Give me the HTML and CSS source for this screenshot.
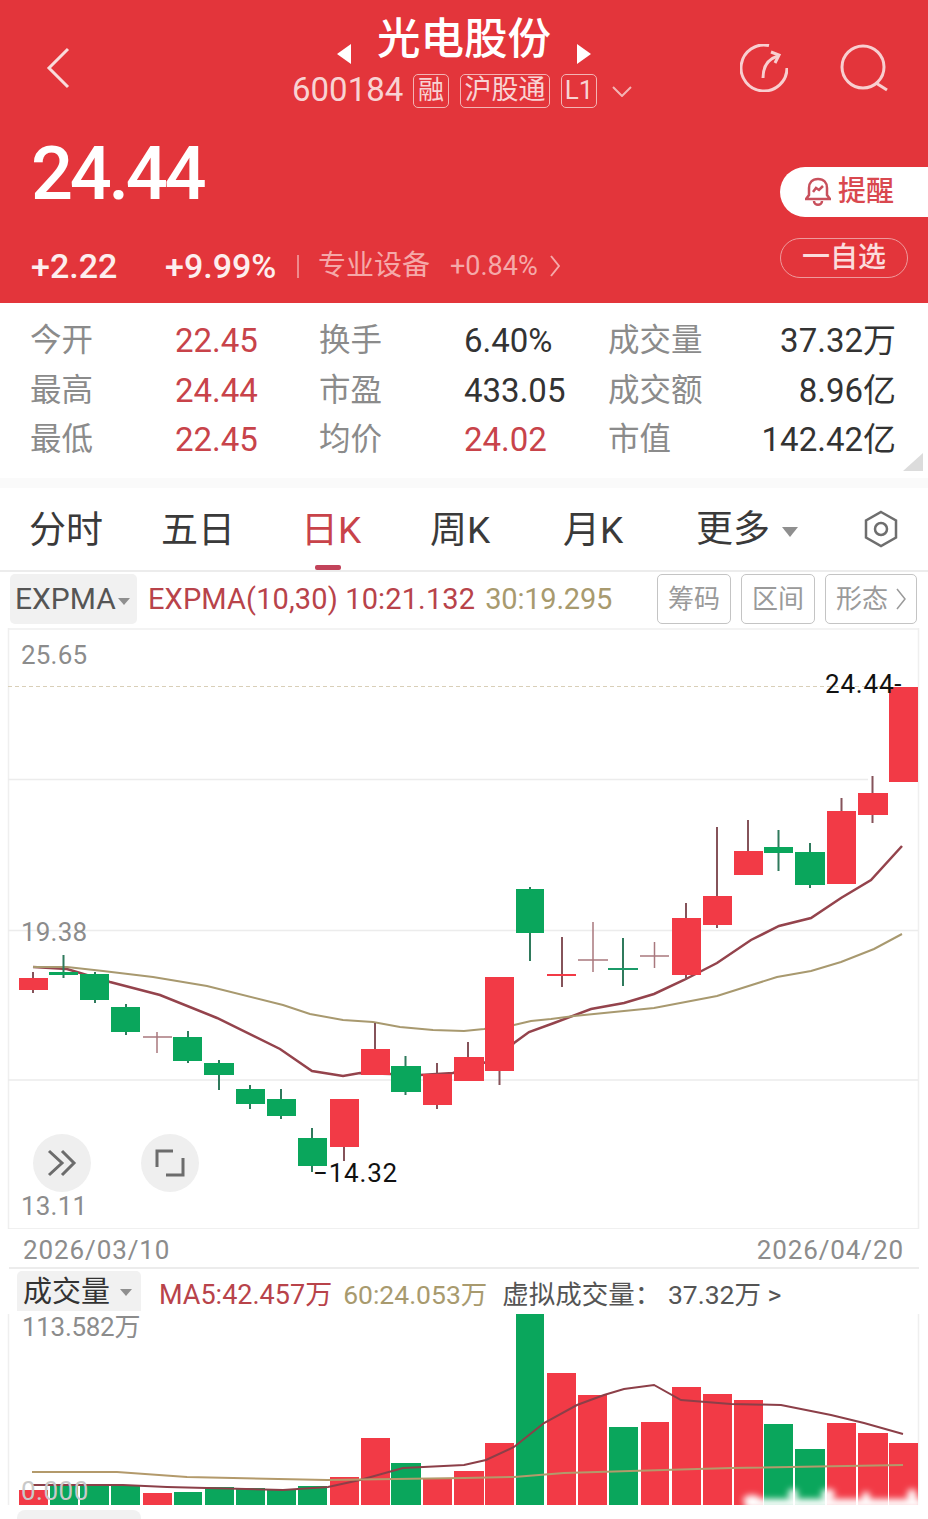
FILE: index.html
```html
<!DOCTYPE html>
<html lang="zh-CN">
<head>
<meta charset="utf-8">
<title>光电股份</title>
<link rel="stylesheet" href="styles.css">
</head>
<body>
<div class="page">
  <header class="hero">
    <div class="topbar">
      <svg class="back" viewBox="0 0 26 44"><path d="M22 3 3 22l19 19"/></svg>
      <div class="identity">
        <div class="title-row">
          <span class="tri tri-l"></span>
          <h1 class="name">光电股份</h1>
          <span class="tri tri-r"></span>
        </div>
        <div class="code-row">
          <span class="code">600184</span>
          <span class="badge b-rong">融</span>
          <span class="badge b-hgt">沪股通</span>
          <span class="badge b-l1">L1</span>
          <svg class="code-arrow" viewBox="0 0 20 11"><path d="M1 1l9 9 9-9"/></svg>
        </div>
      </div>
      <div class="top-icons">
        <svg class="ticon" viewBox="0 0 48 48"><path d="M29 1.5A23 23 0 1 0 47 24"/><path d="M23 34C23 22 28 15 38 12"/><path d="M31 8l8 3-4 8"/></svg>
        <svg class="ticon" viewBox="0 0 48 48"><circle cx="23" cy="23" r="21"/><path d="M36 39l11 7"/></svg>
      </div>
    </div>
    <div class="quote">
      <div class="quote-main">
        <div class="price">24.44</div>
        <div class="change-row">
          <span class="chg chg-a">+2.22</span>
          <span class="chg chg-b">+9.99%</span>
          <span class="sep"></span>
          <span class="sector">专业设备</span>
          <span class="sector-pct">+0.84%</span>
          <svg class="sector-arrow" viewBox="0 0 10 22"><path d="M1 1l8 10-8 10"/></svg>
        </div>
      </div>
      <div class="quote-actions">
        <div class="alert-btn">
          <svg class="bell" viewBox="0 0 26 30"><path d="M13 2C7 2 4 6 4 11v7l-3 4h24l-3-4v-7c0-5-3-9-9-9z"/><path d="M9 24c0 5 8 5 8 0"/><path d="M8 15l3-4 3 2 4-4"/></svg>
          <span>提醒</span>
        </div>
        <div class="watch-btn">一自选</div>
      </div>
    </div>
  </header>

  <section class="stats">
    <span class="lbl">今开</span><span class="val red">22.45</span>
    <span class="lbl">换手</span><span class="val">6.40%</span>
    <span class="lbl">成交量</span><span class="val end">37.32万</span>
    <span class="lbl">最高</span><span class="val red">24.44</span>
    <span class="lbl">市盈</span><span class="val">433.05</span>
    <span class="lbl">成交额</span><span class="val end">8.96亿</span>
    <span class="lbl">最低</span><span class="val red">22.45</span>
    <span class="lbl">均价</span><span class="val red">24.02</span>
    <span class="lbl">市值</span><span class="val end">142.42亿</span>
    <span class="corner"></span>
  </section>
  <div class="band"></div>

  <nav class="tabs">
    <span class="tab">分时</span>
    <span class="tab">五日</span>
    <span class="tab active">日K</span>
    <span class="tab">周K</span>
    <span class="tab">月K</span>
    <span class="tab more">更多<i class="caret"></i></span>
    <svg class="gear" viewBox="0 0 36 38"><path d="M18 2 33 10.500V27.500L18 36 3 27.500V10.500z"/><circle cx="18" cy="19" r="6"/></svg>
  </nav>

  <div class="indicator">
    <div class="picker">EXPMA<i class="caret small"></i></div>
    <div class="ind-values"><span class="v-red">EXPMA(10,30) 10:21.132</span><span class="v-tan">30:19.295</span></div>
    <div class="ind-tools">
      <span class="tool t1">筹码</span>
      <span class="tool t1">区间</span>
      <span class="tool t2">形态<svg class="tool-arrow" viewBox="0 0 10 22"><path d="M1 1l8 10-8 10"/></svg></span>
    </div>
  </div>

  <section class="kchart">
    <svg class="plot" width="928" height="601" viewBox="0 628 928 601">
      <path class="frame" d="M8.500 628V1229M918.500 628V1229M8 629H919"/>
      <path class="dash" d="M8 686.500H890"/>
      <path class="grid" d="M8 779.500H868M8 930.500H918M8 1080H918M8 1229H918"/>
      <polyline class="ema10" points="33,967 67,969 110,982 160,995 217,1018 280,1049 312,1071 343,1076 360,1073 420,1075 453,1073 468,1068 499,1058 514,1043 529,1032 554,1023 591,1009 624,1003 654,994 684,980 717,963 751,940 779,926 811,918 841,898 871,880 902,846"/>
      <polyline class="ema30" points="33,967 67,967 103,971 153,977 207,986 283,1005 310,1014 343,1020 373,1022 400,1027 433,1030 464,1031 484,1029 514,1025 531,1021 551,1019 574,1016 614,1012 654,1008 717,996 777,977 811,971 841,962 874,949 902,934"/>

      <path class="wr" d="M33 972V993M344 1147V1161M375 1023V1049M437 1063V1109M468 1042V1081M499.500 1071V1085M686 903V980M717 827V928M748 820V851M841.500 798V811M872.500 776V823"/>
      <path class="wg" d="M63.500 955V978M95 972V1003M126 1004V1035M188 1031V1063M219 1060V1090M250 1085V1109M281 1089V1119M312 1128V1172M405.500 1056V1095M530 887V961M623 938V986M778.500 830V871M810 843V888"/>
      <path class="wthin" d="M157 1032V1053M143 1037H172M593 922V972M578 960H608M654.500 942V968M640 956H669"/>
      <path class="wr" d="M562 937V987"/>
      <path class="wthing" d="M608 969H638"/>

      <rect class="r" x="19" y="978" width="29" height="12"/>
      <rect class="g" x="49" y="972" width="29" height="3"/>
      <rect class="g" x="80" y="974" width="29" height="26"/>
      <rect class="g" x="111" y="1007" width="29" height="25"/>
      <rect class="g" x="173" y="1037" width="29" height="24"/>
      <rect class="g" x="204" y="1063" width="30" height="12"/>
      <rect class="g" x="236" y="1089" width="29" height="15"/>
      <rect class="g" x="267" y="1099" width="29" height="17"/>
      <rect class="g" x="298" y="1138" width="29" height="28"/>
      <rect class="r" x="330" y="1099" width="29" height="48"/>
      <rect class="r" x="361" y="1049" width="29" height="26"/>
      <rect class="g" x="391" y="1066" width="30" height="26"/>
      <rect class="r" x="423" y="1074" width="29" height="31"/>
      <rect class="r" x="454" y="1057" width="30" height="24"/>
      <rect class="r" x="485" y="977" width="29" height="94"/>
      <rect class="g" x="516" y="889" width="28" height="44"/>
      <rect class="r" x="547" y="974" width="29" height="2"/>
      <rect class="r" x="672" y="918" width="29" height="57"/>
      <rect class="r" x="703" y="896" width="29" height="29"/>
      <rect class="r" x="734" y="851" width="29" height="24"/>
      <rect class="g" x="764" y="847" width="29" height="6"/>
      <rect class="g" x="795" y="852" width="30" height="33"/>
      <rect class="r" x="827" y="811" width="29" height="73"/>
      <rect class="r" x="858" y="793" width="30" height="22"/>
      <rect class="r" x="889" y="687" width="29" height="95"/>
    </svg>
    <span class="axis a-top">25.65</span>
    <span class="axis a-mid">19.38</span>
    <span class="axis a-low">13.11</span>
    <span class="mark m-high">24.44-</span>
    <span class="mark m-low">−14.32</span>
    <div class="round r-a"><svg viewBox="0 0 58 58"><path d="M16 17l13 12-13 12M29 17l12 12-12 12"/></svg></div>
    <div class="round r-b"><svg viewBox="0 0 58 58"><path d="M16 33V17h16M42 24v17H25"/></svg></div>
  </section>

  <div class="dates"><span>2026/03/10</span><span>2026/04/20</span></div>

  <div class="vol-head">
    <div class="vol-picker"><span class="vp-text">成交量</span><i class="caret small"></i></div>
    <span class="vh vh-red">MA5:42.457万</span>
    <span class="vh vh-tan">60:24.053万</span>
    <span class="vh vh-dark">虚拟成交量： 37.32万 &gt;</span>
  </div>

  <section class="vchart">
    <svg class="plot" width="928" height="191" viewBox="0 1314 928 191">
      <defs><filter id="smudge" x="-10%" y="-60%" width="120%" height="220%"><feGaussianBlur stdDeviation="3"/></filter></defs>
      <path class="frame" d="M8.500 1314V1505M918.500 1314V1505"/>
      <rect class="r" x="19" y="1490" width="29" height="15"/>
      <rect class="g" x="50" y="1486" width="28" height="19"/>
      <rect class="g" x="80" y="1486" width="29" height="19"/>
      <rect class="g" x="111" y="1486" width="29" height="19"/>
      <rect class="r" x="143" y="1493" width="29" height="12"/>
      <rect class="g" x="174" y="1492" width="28" height="13"/>
      <rect class="g" x="205" y="1487" width="29" height="18"/>
      <rect class="g" x="236" y="1488" width="29" height="17"/>
      <rect class="g" x="267" y="1490" width="29" height="15"/>
      <rect class="g" x="298" y="1486" width="29" height="19"/>
      <rect class="r" x="330" y="1477" width="29" height="28"/>
      <rect class="r" x="361" y="1438" width="29" height="67"/>
      <rect class="g" x="391" y="1463" width="30" height="42"/>
      <rect class="r" x="423" y="1478" width="29" height="27"/>
      <rect class="r" x="454" y="1471" width="30" height="34"/>
      <rect class="r" x="485" y="1443" width="29" height="62"/>
      <rect class="g" x="516" y="1314" width="28" height="191"/>
      <rect class="r" x="547" y="1373" width="29" height="132"/>
      <rect class="r" x="578" y="1395" width="29" height="110"/>
      <rect class="g" x="609" y="1427" width="29" height="78"/>
      <rect class="r" x="641" y="1422" width="28" height="83"/>
      <rect class="r" x="672" y="1387" width="29" height="118"/>
      <rect class="r" x="703" y="1394" width="29" height="111"/>
      <rect class="r" x="734" y="1400" width="29" height="105"/>
      <rect class="g" x="764" y="1424" width="29" height="81"/>
      <rect class="g" x="795" y="1449" width="30" height="56"/>
      <rect class="r" x="827" y="1423" width="29" height="82"/>
      <rect class="r" x="858" y="1433" width="30" height="72"/>
      <rect class="r" x="889" y="1443" width="29" height="62"/>
      <polyline class="ma5" points="32,1485 123,1485 167,1487 283,1490 328,1487 360,1480 403,1468 464,1465 486,1460 514,1447 544,1423 577,1405 604,1395 624,1389 654,1385 681,1400 731,1404 781,1405 831,1415 864,1423 903,1434"/>
      <polyline class="ma60" points="32,1472 117,1472 187,1477 327,1480 464,1478 514,1477 564,1473 664,1470 731,1468 903,1465"/>
      <g class="smudge" filter="url(#smudge)">
        <rect x="745" y="1499" width="178" height="10"/>
        <ellipse cx="752" cy="1500" rx="9" ry="5"/>
        <ellipse cx="793" cy="1494" rx="5" ry="5"/>
        <ellipse cx="828" cy="1494" rx="7" ry="5"/>
        <ellipse cx="866" cy="1496" rx="4" ry="4"/>
        <ellipse cx="912" cy="1495" rx="5" ry="6"/>
      </g>
    </svg>
    <span class="axis v-top">113.582万</span>
    <span class="axis v-zero">0.000</span>
  </section>

  <footer class="stub"><div class="stub-pill"></div></footer>
</div>
</body>
</html>
```
FILE: styles.css
```css
* { box-sizing: border-box; margin: 0; padding: 0; }
html, body { background: #fff; }
body {
  width: 928px;
  height: 1519px;
  overflow: hidden;
  font-family: Roboto, "Noto Sans CJK SC", sans-serif;
  color: #222;
}
.page { width: 928px; height: 1519px; display: flex; flex-direction: column; }
svg { display: block; }
i { display: block; }

/* header */
.hero { height: 303px; background: #e3353b; color: #fff; flex: none; }
.topbar { height: 118px; display: grid; grid-template-columns: 1fr auto 1fr; position: relative; }
.back { width: 26px; height: 44px; margin: 46px 0 0 46px; fill: none; stroke: #f9dcdc; stroke-width: 3; }
.identity { display: flex; flex-direction: column; align-items: center; padding-top: 15px; }
.title-row { display: flex; align-items: center; height: 50px; gap: 26px; }
.name { font-size: 43.500px; line-height: 50px; font-weight: 500; color: #fff; white-space: nowrap; }
.tri { width: 0; height: 0; border-style: solid; margin-top: 28px; }
.tri-l { border-width: 10px 14px 10px 0; border-color: transparent #fff transparent transparent; }
.tri-r { border-width: 10px 0 10px 14px; border-color: transparent transparent transparent #fff; }
.code-row { display: flex; align-items: center; height: 36px; margin: 7px 4px 0 0; color: #f8d3d3; }
.code { font-size: 33px; line-height: 36px; width: 121px; }
.badge {
  height: 34px; border: 1.5px solid #f3b4b4; border-radius: 5px; font-size: 27px; line-height: 30px;
  text-align: center; white-space: nowrap; overflow: hidden; margin-top: 2px;
}
.b-rong { width: 36px; margin-right: 11px; font-size: 26px; }
.b-hgt { width: 90px; margin-right: 11px; font-size: 27px; }
.b-l1 { width: 36px; margin-right: 15px; font-size: 26px; }
.code-arrow { width: 20px; height: 11px; fill: none; stroke: #f3b4b4; stroke-width: 2; margin-top: 2px; }
.top-icons { display: flex; justify-content: flex-end; gap: 52px; padding: 44px 40px 0 0; }
.ticon { width: 48px; height: 48px; fill: none; stroke: #f8cfd0; stroke-width: 3; flex: none; }

.quote { display: flex; justify-content: space-between; height: 185px; }
.quote-main { padding-left: 31px; }
.price { font-size: 74px; line-height: 74px; letter-spacing: -3.300px; font-weight: 500; margin-top: 19px; }
.change-row { display: flex; align-items: center; height: 40px; margin-top: 35px; }
.chg { font-size: 34px; line-height: 40px; font-weight: 500; color: #fdeeee; }
.chg-a { width: 134px; }
.chg-b { width: 132px; }
.sep { width: 2px; height: 23px; background: #ee8a8c; margin-right: 19px; }
.sector { font-size: 28px; line-height: 40px; color: #f5a9a9; width: 132px; }
.sector-pct { font-size: 27px; line-height: 40px; color: #f5a9a9; width: 100px; }
.sector-arrow { width: 10px; height: 22px; fill: none; stroke: #f5a9a9; stroke-width: 2; }
.quote-actions { width: 148px; padding-top: 49px; }
.alert-btn {
  height: 50px; background: #fff; border-radius: 25px 0 0 25px; display: flex; align-items: center;
  padding-left: 25px; gap: 7px; color: #d9484f; font-size: 28px; line-height: 50px; font-weight: 500;
}
.bell { width: 26px; height: 30px; fill: none; stroke: #c8505c; stroke-width: 2.500; }
.watch-btn {
  width: 128px; height: 40px; margin-top: 21px; border: 1.5px solid #ee9a9c; border-radius: 20px;
  color: #fbdcdc; font-size: 28px; line-height: 37px; text-align: center; font-weight: 500;
}

/* stats */
.stats {
  height: 175px; flex: none; padding: 13px 32px 0 30px; position: relative;
  display: grid; grid-template-columns: 145px 144px 145px 144px 1fr auto; grid-auto-rows: 49.500px; align-items: center;
}
.lbl { font-size: 31.500px; line-height: 49px; color: #8b8b8b; white-space: nowrap; }
.val { font-size: 33px; line-height: 49px; color: #333; white-space: nowrap; }
.val.red { color: #c8434a; }
.val.end { text-align: right; }
.corner {
  position: absolute; left: 903px; top: 150px; width: 20px; height: 18px; background: #dcdcdc;
  clip-path: polygon(100% 0, 100% 100%, 0 100%);
}
.band { height: 10px; flex: none; background: #fafafa; }

/* tabs */
.tabs {
  height: 84px; flex: none; padding-left: 29px; position: relative; border-bottom: 2px solid #ececec;
  display: grid; grid-template-columns: 132px 140px 129px 133px 133px 167px 36px; align-items: center;
}
.tab { font-size: 37px; line-height: 82px; height: 82px; padding-top: 2px; color: #3a3a3a; position: relative; white-space: nowrap; }
.tab.active { color: #c8434a; }
.tab.active::after {
  content: ""; position: absolute; left: 14px; bottom: 0; width: 26px; height: 5px; background: #c2435a; border-radius: 2px;
}
.tab.more { display: flex; align-items: center; gap: 12px; }
.caret { width: 0; height: 0; border-style: solid; border-width: 10px 8px 0 8px; border-color: #8f8f8f transparent transparent transparent; margin-top: 4px; }
.caret.small { border-width: 7px 6px 0 6px; }
.gear { width: 36px; height: 38px; fill: none; stroke: #6e6e6e; stroke-width: 2.500; }

/* indicator row */
.indicator { height: 56px; flex: none; display: flex; align-items: center; padding: 0 11px 2px 10px; }
.picker {
  width: 127px; height: 50px; background: #f1f1f1; border-radius: 5px; display: flex; align-items: center;
  padding-left: 5px; gap: 2px; font-size: 30px; line-height: 50px; color: #555;
}
.ind-values { margin-left: 11px; display: flex; gap: 10px; font-size: 29px; letter-spacing: 0.130px; line-height: 50px; white-space: nowrap; flex: 1; }
.v-red { color: #b8434a; }
.v-tan { color: #a89a6e; letter-spacing: -0.200px; }
.ind-tools { display: flex; gap: 10px; position: relative; }
.tool {
  height: 50px; border: 1.5px solid #c4c4c4; border-radius: 5px; font-size: 26px; line-height: 47px;
  color: #9a9a9a; text-align: center; display: flex; align-items: center; justify-content: center; gap: 8px;
}
.t1 { width: 74px; }
.t2 { width: 92px; }
.tool-arrow { width: 10px; height: 22px; fill: none; stroke: #9a9a9a; stroke-width: 1.500; }

/* charts */
.kchart { height: 601px; flex: none; position: relative; }
.vchart { height: 191px; flex: none; position: relative; }
.plot { position: absolute; left: 0; top: 0; }
.frame { fill: none; stroke: #efefef; stroke-width: 1.500; }
.grid { fill: none; stroke: #ececec; stroke-width: 1.500; }
.dash { fill: none; stroke: #d9cfb8; stroke-width: 1; stroke-dasharray: 4 3; }
.ema10 { fill: none; stroke: #94434c; stroke-width: 2.500; }
.ema30 { fill: none; stroke: #a8996f; stroke-width: 2; }
.ma5 { fill: none; stroke: #8c3f48; stroke-width: 2; }
.ma60 { fill: none; stroke: #b39a6b; stroke-width: 2; }
.r { fill: #f23a46; }
.g { fill: #0aa65c; }
.wr { fill: none; stroke: #85535a; stroke-width: 2; }
.wg { fill: none; stroke: #2f7a5c; stroke-width: 2; }
.wthin { fill: none; stroke: #a9787e; stroke-width: 1.500; }
.wthing { fill: none; stroke: #1b9a68; stroke-width: 2; }
.smudge { fill: #fff; }

.axis { position: absolute; font-size: 26px; line-height: 26px; letter-spacing: 0.200px; color: #8c8c8c; white-space: nowrap; }
.a-top { left: 21px; top: 14px; }
.a-mid { left: 21px; top: 291px; }
.a-low { left: 21px; top: 565px; }
.v-top { left: 22px; top: 0; letter-spacing: -0.300px; }
.v-zero { left: 21px; top: 164px; color: #c9c9c9; letter-spacing: 0.500px; }
.mark { position: absolute; font-size: 26px; line-height: 26px; letter-spacing: 0.800px; color: #111; white-space: nowrap; }
.m-high { left: 825px; top: 43px; }
.m-low { left: 313px; top: 532px; }
.round { position: absolute; top: 506px; width: 58px; height: 58px; border-radius: 50%; background: #efefef; }
.round svg { width: 58px; height: 58px; fill: none; stroke: #6c6c6c; stroke-width: 3; }
.r-a { left: 33px; }
.r-b { left: 141px; }

.dates {
  height: 40px; flex: none; display: flex; justify-content: space-between;
  font-size: 26px; line-height: 42px; letter-spacing: 0.900px; color: #8c8c8c;
  border-bottom: 2px solid #ececec; margin: 0 9px; padding: 0 15px 0 14px;
}
.vol-head { height: 45px; flex: none; display: flex; align-items: center; padding: 0 0 2px 17px; white-space: nowrap; }
.vol-picker {
  width: 124px; height: 40px; background: #f1f1f1; border-radius: 5px 5px 0 0; display: flex; align-items: center;
  padding-left: 6px; gap: 10px; font-size: 29px; line-height: 40px; color: #333;
}
.vp-text { padding-top: 3px; }
.vh { font-size: 26.500px; line-height: 40px; margin-top: 9px; }
.vh-red { color: #b8434a; margin-left: 18px; font-size: 27px; }
.vh-tan { color: #a89a6e; margin-left: 11px; }
.vh-dark { color: #555; margin-left: 15px; }

.stub { flex: 1; padding: 5px 0 0 17px; }
.stub-pill { width: 124px; height: 9px; background: #f1f1f1; border-radius: 8px 8px 0 0; }
```
